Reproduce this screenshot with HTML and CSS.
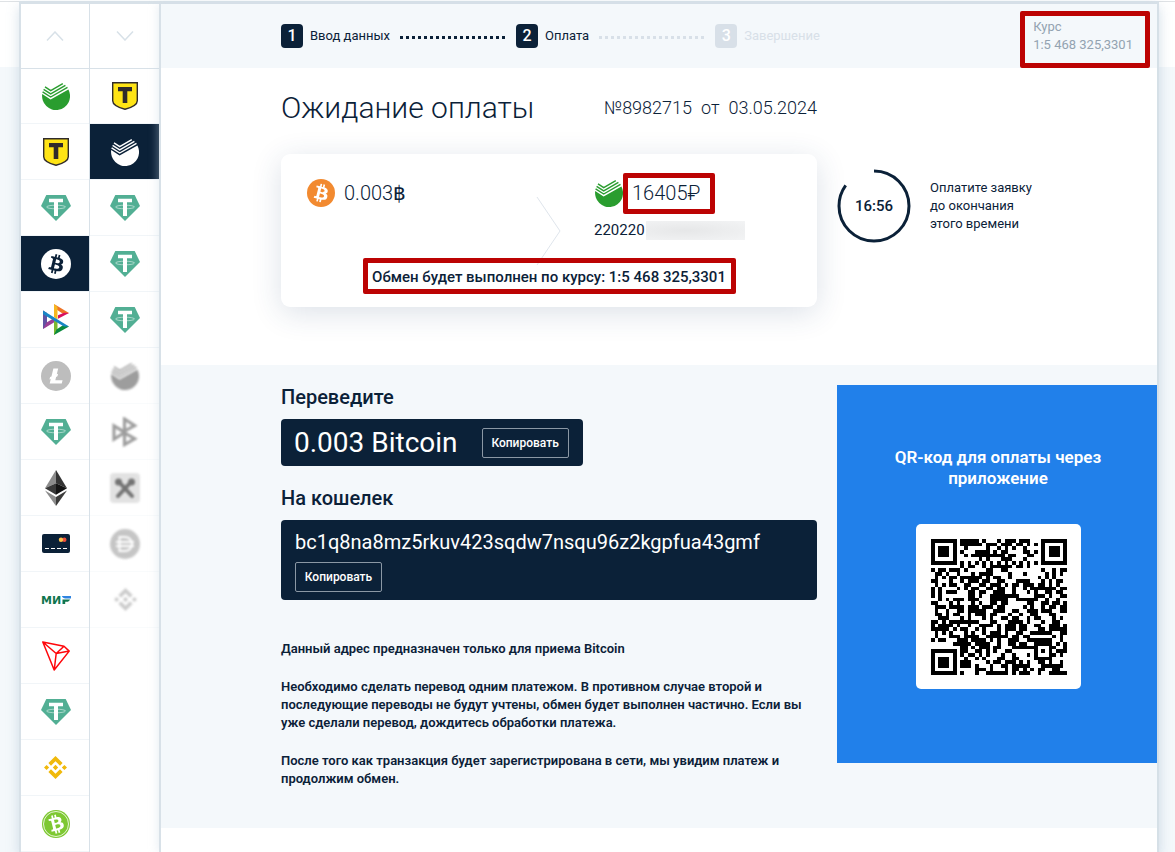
FILE: index.html
```html
<!DOCTYPE html>
<html lang="ru">
<head>
  <meta charset="UTF-8" />
  <meta name="viewport" content="width=device-width, initial-scale=1.0"/>
  <title>Ожидание оплаты</title>
  <link rel="stylesheet" href="styles.css">
</head>
<body>
  <!-- Icon sprite -->
  <svg class="sprite" aria-hidden="true">
    <symbol id="i-sber" viewBox="0 0 28 28">
      <path fill="currentColor" d="M.2 12 8.6 17.400 26.400 7.400A14 14 0 1 1 .2 12z"/>
      <path fill="none" stroke="currentColor" stroke-width="1.4" d="M.6 9.800 8.700 15 25.500 5.400M1.600 7.300l7.100 4.600L23.400 3.400M3 4.800l5.700 3.800L20.800 1.600"/>
    </symbol>
    <symbol id="i-tbank" viewBox="0 0 28 28">
      <path fill="#ffe415" stroke="#302b2b" stroke-width="1.4" d="M1.7.7h24.6v18.1c0 3.7-5 6.6-12.3 8.5C6.7 25.4 1.7 22.5 1.7 18.8z"/>
      <path fill="#302b2b" d="M7 5h14v4.2h-4.7V21h-4.6V9.2H7z"/>
    </symbol>
    <symbol id="i-usdt" viewBox="0 0 30 26">
      <path fill="#52af94" d="M5.3 0h19.4L30 11 15 26 0 11z"/>
      <path fill="#fff" d="M8 3.8h14v3.4h-5V21h-4V7.2H8z"/>
      <ellipse cx="15" cy="12" rx="9.5" ry="1.8" fill="none" stroke="#fff" stroke-width=".5"/>
    </symbol>
    <symbol id="i-btc" viewBox="0 0 32 32">
      <path fill="currentColor" d="M23.189 14.02c.314-2.096-1.283-3.223-3.465-3.975l.708-2.84-1.728-.43-.69 2.765c-.454-.114-.92-.22-1.385-.326l.695-2.783L15.596 6l-.708 2.839c-.376-.086-.746-.17-1.104-.26l.002-.009-2.384-.595-.46 1.846s1.283.294 1.256.312c.7.175.826.638.805 1.006l-.806 3.235c.048.012.11.03.18.057l-.183-.045-1.13 4.532c-.086.212-.303.531-.793.41.018.025-1.256-.313-1.256-.313l-.858 1.978 2.25.561c.418.105.828.215 1.231.318l-.715 2.872 1.727.43.708-2.84c.472.127.93.245 1.378.357l-.706 2.828 1.728.43.715-2.866c2.948.558 5.164.333 6.097-2.333.752-2.146-.037-3.385-1.588-4.192 1.13-.26 1.98-1.003 2.207-2.538zm-3.95 5.538c-.533 2.147-4.148.986-5.32.695l.95-3.805c1.172.293 4.929.872 4.37 3.11zm.535-5.569c-.487 1.953-3.495.96-4.47.717l.86-3.45c.975.243 4.118.696 3.61 2.733z"/>
    </symbol>
    <symbol id="i-adv" viewBox="0 0 26 31">
      <path fill="#ee7326" d="M11 0 26 9 21 10.5 13.5 5.5z"/>
      <path fill="#d9105f" d="M26 9 15 14.8V11.3L21 8.8z"/>
      <path fill="#f6b820" d="M11 0l3.5 3V15.5L11 13z"/>
      <path fill="#6153a3" d="M0 6.5 4 9v13L0 25z"/>
      <path fill="#9a3f96" d="M0 25 13 17.2 9.5 15 3.5 18.5z"/>
      <path fill="#7cb82f" d="M11 16h3.5v12.3L11 31z"/>
      <path fill="#0b8a3e" d="M11 31 26 22.5 21 20.5 13.5 25.5z"/>
      <path fill="#1986c6" d="M0 6.5 26 22.5h-5L0 10.3z"/>
    </symbol>
    <symbol id="i-adv-mono" viewBox="0 0 26 31">
      <path fill="none" stroke="currentColor" stroke-width="3.2" d="M12.5 2 23 9 12.5 14.5zM1.6 9v14L12.5 16zM12.5 16.5 23 22.5 12.5 28.5zM1.6 9l11 6.5"/>
    </symbol>
    <symbol id="i-ltc" viewBox="0 0 32 32">
      <circle cx="16" cy="16" r="16" fill="#bdbdbd"/>
      <path fill="#fff" d="M10.427 19.214L9 19.768l.688-2.759 1.444-.58L13.213 8h5.129l-1.519 6.196 1.41-.571-.68 2.75-1.427.571-.848 3.483H23L22.127 24H9.252z"/>
    </symbol>
    <symbol id="i-eth" viewBox="0 0 22 36">
      <path fill="#8c8c8c" d="M11 0 0 18.3 11 13.3z"/>
      <path fill="#343434" d="M11 0v13.3l11 5z"/>
      <path fill="#393939" d="M0 18.3 11 24.8V13.3z"/>
      <path fill="#141414" d="M22 18.3 11 24.8V13.3z"/>
      <path fill="#8c8c8c" d="M0 20.4 11 36V27z"/>
      <path fill="#3c3c3b" d="M22 20.4 11 36V27z"/>
    </symbol>
    <symbol id="i-card" viewBox="0 0 28 19">
      <rect width="28" height="19" rx="2" fill="#0b2138"/>
      <circle cx="22.3" cy="5.8" r="2.2" fill="#ee4f3c"/>
      <circle cx="19" cy="5.8" r="2.2" fill="#fbc04a"/>
      <path stroke="#fff" stroke-width="1.2" stroke-dasharray="4 2" d="M3 14.5h22"/>
    </symbol>
    <symbol id="i-trx" viewBox="0 0 28 30">
      <path fill="none" stroke="#ff060a" stroke-width="1.5" stroke-linejoin="round" d="M.8 1 22 5.2l5.2 4.9L12.2 29zM.8 1l13.4 11.5L22 5.2M14.2 12.5l13-2.4M14.2 12.5l-2 16.5"/>
    </symbol>
    <symbol id="i-bnb" viewBox="0 0 24 24">
      <path fill="currentColor" d="M7.3 10.1 12 5.4l4.7 4.7 2.7-2.7L12 0 4.6 7.4zM0 12l2.7-2.7L5.4 12l-2.7 2.7zM7.3 13.9 12 18.6l4.7-4.7 2.7 2.7L12 24l-7.4-7.4zM18.6 12l2.7-2.7L24 12l-2.7 2.7zM14.8 12 12 14.8 9.2 12 12 9.2z"/>
    </symbol>
    <symbol id="i-bch" viewBox="0 0 28 28">
      <circle cx="14" cy="14" r="14" fill="#7ec832"/>
      <circle cx="14" cy="14" r="12.5" fill="none" stroke="#fff" stroke-width=".8"/>
      <use href="#i-btc" class="white" x="-1.5" y="-1.5" width="31" height="31" transform="rotate(-28 14 14)"/>
    </symbol>
    <symbol id="i-tools" viewBox="0 0 30 30">
      <rect width="30" height="30" rx="4" fill="#dedede"/>
      <path stroke="#5c5c5c" stroke-width="4" stroke-linecap="round" d="M9 9l13 14M21 9 8 23"/>
      <circle cx="8.5" cy="9" r="3.5" fill="#5c5c5c"/>
      <circle cx="21.5" cy="9" r="3.5" fill="#5c5c5c"/>
    </symbol>
    <symbol id="i-dai" viewBox="0 0 30 30">
      <circle cx="15" cy="15" r="15" fill="#bcbcbc"/>
      <path fill="none" stroke="#fff" stroke-width="2" d="M9.5 8H15a7 7 0 0 1 0 14H9.5zM6 13h18M6 17h18"/>
    </symbol>
  </svg>

  <div class="shell">
    <aside class="sidebar">
      <div class="column">
        <button class="scroll" aria-label="Вверх"><svg width="18" height="10" viewBox="0 0 18 10"><path d="M1 9.5 9 1l8 8.5"/></svg></button>
        <button class="coin green" aria-label="Сбер"><svg width="28" height="28"><use href="#i-sber"/></svg></button>
        <button class="coin" aria-label="Т-Банк"><svg width="28" height="28"><use href="#i-tbank"/></svg></button>
        <button class="coin" aria-label="USDT"><svg width="30" height="26"><use href="#i-usdt"/></svg></button>
        <button class="coin active" aria-label="Bitcoin">
          <svg width="30" height="30" viewBox="0 0 30 30"><circle cx="15" cy="15" r="15" fill="#fff"/><use href="#i-btc" class="navy" x="-1" y="-1" width="32" height="32"/></svg>
        </button>
        <button class="coin" aria-label="СБП"><svg width="26" height="31"><use href="#i-adv"/></svg></button>
        <button class="coin" aria-label="Litecoin"><svg width="30" height="30"><use href="#i-ltc"/></svg></button>
        <button class="coin" aria-label="USDT"><svg width="30" height="26"><use href="#i-usdt"/></svg></button>
        <button class="coin" aria-label="Ethereum"><svg width="22" height="36"><use href="#i-eth"/></svg></button>
        <button class="coin" aria-label="Карта"><svg width="28" height="19"><use href="#i-card"/></svg></button>
        <button class="coin" aria-label="Мир">
          <svg width="32" height="20" viewBox="0 0 32 20">
            <text class="mir" x="1" y="14">МИ</text>
            <path fill="#0f754e" d="M22.5 9.5H30c-.6 1.5-1.8 2.3-3.3 2.3h-1.500V14h-2.700z"/>
            <path fill="#2f83e0" d="M21.800 6H31v2.500h-5.500c-1.700 0-3.200-1-3.700-2.500z"/>
          </svg>
        </button>
        <button class="coin" aria-label="Tron"><svg width="28" height="30"><use href="#i-trx"/></svg></button>
        <button class="coin" aria-label="USDT"><svg width="30" height="26"><use href="#i-usdt"/></svg></button>
        <button class="coin gold" aria-label="BNB"><svg width="23" height="23"><use href="#i-bnb"/></svg></button>
        <button class="coin" aria-label="Bitcoin Cash"><svg width="28" height="28"><use href="#i-bch"/></svg></button>
      </div>
      <div class="column">
        <button class="scroll" aria-label="Вниз"><svg width="18" height="10" viewBox="0 0 18 10"><path d="M1 .5 9 9l8-8.5"/></svg></button>
        <button class="coin" aria-label="Т-Банк"><svg width="28" height="28"><use href="#i-tbank"/></svg></button>
        <button class="coin active" aria-label="Сбер"><svg width="28" height="28"><use href="#i-sber"/></svg></button>
        <button class="coin" aria-label="USDT"><svg width="30" height="26"><use href="#i-usdt"/></svg></button>
        <button class="coin" aria-label="USDT"><svg width="30" height="26"><use href="#i-usdt"/></svg></button>
        <button class="coin" aria-label="USDT"><svg width="30" height="26"><use href="#i-usdt"/></svg></button>
        <button class="coin disabled" disabled aria-label="Сбер"><svg width="28" height="28"><use href="#i-sber"/></svg></button>
        <button class="coin disabled" disabled aria-label="СБП"><svg width="26" height="30"><use href="#i-adv-mono"/></svg></button>
        <button class="coin disabled" disabled aria-label="Обмен"><svg width="30" height="30"><use href="#i-tools"/></svg></button>
        <button class="coin disabled" disabled aria-label="Dai"><svg width="30" height="30"><use href="#i-dai"/></svg></button>
        <button class="coin disabled pale" disabled aria-label="BNB"><svg width="23" height="23"><use href="#i-bnb"/></svg></button>
      </div>
    </aside>

    <main class="main">
      <header class="topbar">
        <ol class="steps">
          <li class="step"><span class="num">1</span>Ввод данных</li>
          <li class="dots"></li>
          <li class="step"><span class="num">2</span>Оплата</li>
          <li class="dots muted"></li>
          <li class="step muted"><span class="num">3</span>Завершение</li>
        </ol>
        <div class="rate marked">Курс<br>1:5 468 325,3301</div>
      </header>

      <section class="order">
        <div class="order-left">
          <div class="order-head">
            <h1>Ожидание оплаты</h1>
            <p class="order-no"><span>№8982715</span> <span>от</span> <span>03.05.2024</span></p>
          </div>
          <div class="card">
            <div class="pair">
              <div class="amount">
                <svg width="28" height="28" viewBox="0 0 28 28"><circle cx="14" cy="14" r="14" fill="#f28a30"/><use href="#i-btc" class="white" x="-1" y="-1" width="30" height="30"/></svg>
                <span>0.003<b>฿</b></span>
              </div>
              <svg class="arrow" width="25" height="70" viewBox="0 0 25 70"><path d="M1 1l23 34L1 69"/></svg>
              <div class="receive">
                <div class="amount">
                  <svg class="green" width="28" height="28"><use href="#i-sber"/></svg>
                  <span class="marked sum">16405₽</span>
                </div>
                <div class="account">220220<span class="hidden-part"></span></div>
              </div>
            </div>
            <p class="card-rate"><span class="marked">Обмен будет выполнен по курсу: 1:5 468 325,3301</span></p>
          </div>
        </div>
        <div class="timer">
          <div class="clock">
            <svg width="74" height="74" viewBox="0 0 74 74"><circle cx="37" cy="37" r="35" pathLength="100"/></svg>
            <span>16:56</span>
          </div>
          <p>Оплатите заявку<br>до окончания<br>этого времени</p>
        </div>
      </section>

      <section class="payment">
        <div class="details">
          <h2>Переведите</h2>
          <div class="box box-sum">
            <span class="value">0.003 Bitcoin</span>
            <button class="copy">Копировать</button>
          </div>
          <h2>На кошелек</h2>
          <div class="box box-wallet">
            <span class="value">bc1q8na8mz5rkuv423sqdw7nsqu96z2kgpfua43gmf</span>
            <button class="copy">Копировать</button>
          </div>
          <div class="notes">
            <p>Данный адрес предназначен только для приема Bitcoin</p>
            <p>Необходимо сделать перевод одним платежом. В противном случае второй и последующие переводы не будут учтены, обмен будет выполнен частично. Если вы уже сделали перевод, дождитесь обработки платежа.</p>
            <p>После того как транзакция будет зарегистрирована в сети, мы увидим платеж и продолжим обмен.</p>
          </div>
        </div>
        <div class="qr-panel">
          <h3>QR-код для оплаты через приложение</h3>
          <div class="qr"><svg id="qr" viewBox="0 0 37 37" shape-rendering="crispEdges"></svg></div>
        </div>
      </section>
    </main>
  </div>
  <script src="script.js"></script>
</body>
</html>
```
FILE: styles.css
```css
* {
  box-sizing: border-box;
}

body {
  margin: 0;
  font-family: Roboto, sans-serif;
  font-size: 13px;
  line-height: 18px;
  color: #0b2138;
  background: linear-gradient(#fff 1px, #dfe2e5 1px 2px, #fff 2px 67px, #f4f8fb 67px);
}

body::before {
  content: "";
  display: block;
  height: 1px;
}

h1, h2, h3, p, ol {
  margin: 0;
  padding: 0;
}

button {
  font-family: inherit;
  cursor: pointer;
}

.sprite {
  position: absolute;
  width: 0;
  height: 0;
}

.shell {
  display: flex;
  min-height: calc(100vh - 1px);
  margin: 0 16px 0 19px;
  border: 2px solid #d8e1e8;
  border-top-width: 3px;
  border-bottom: 0;
  background: #fff;
  box-shadow: 0 6px 12px rgba(120, 155, 185, 0.3);
}

/* Currency columns */
.sidebar {
  display: flex;
  flex: none;
}

.column {
  display: flex;
  flex-direction: column;
  width: 69px;
  border-right: 1px solid #d8e1e8;
}

.column + .column {
  border-right: 0;
}

.scroll {
  position: relative;
  height: 64px;
  padding: 0;
  border: 0;
  background: #fff;
  box-shadow: 0 1px 0 #d8e1e8;
}

.scroll path {
  fill: none;
  stroke: #d8e1e8;
  stroke-width: 1.5;
}

.coin {
  display: flex;
  align-items: center;
  justify-content: center;
  height: 56px;
  padding: 0 0 0 1px;
  border: 0;
  border-bottom: 1px solid #f1f5f8;
  background: #fff;
  color: #0b2138;
}

.coin.active {
  background: #0b2138;
  background-clip: padding-box;
  color: #fff;
}

.green,
.coin.green {
  color: #2a9d2f;
}

.coin.gold {
  color: #f0b90b;
}

.coin.disabled {
  color: #8c8c8c;
  border-bottom-color: #f9fbfc;
}

.coin.disabled svg {
  filter: blur(1px);
  opacity: 0.85;
}

.coin.pale {
  color: #c4c4c4;
}

.navy {
  color: #0b2138;
}

.white {
  color: #fff;
}

.mir {
  font: bold 11px "DejaVu Sans", sans-serif;
  fill: #0f754e;
}

/* Main area */
.main {
  flex: 1;
  position: relative;
  border-left: 2px solid #d8e1e8;
  box-shadow: -2px 0 8px rgba(200, 215, 225, 0.35);
  background: #fff;
}

.topbar {
  display: flex;
  justify-content: space-between;
  height: 64px;
  padding: 0 24px 0 120px;
  background: #f4f8fb;
}

.steps {
  display: flex;
  align-items: center;
  list-style: none;
}

.step {
  display: flex;
  align-items: center;
  gap: 7px;
}

.num {
  width: 22px;
  height: 24px;
  border-radius: 4px;
  background: #0b2138;
  color: #fff;
  font-size: 16px;
  font-weight: 500;
  line-height: 24px;
  text-align: center;
}

.dots {
  width: 107px;
  height: 3px;
  margin: 2px 9px 0 10px;
  background: repeating-linear-gradient(90deg, #0b2138 0 3px, transparent 3px 6px);
}

.step.muted {
  color: #d8e0e8;
}

.step.muted .num {
  background: #d8e0e8;
  color: #fff;
}

.dots.muted {
  background: repeating-linear-gradient(90deg, #d8e0e8 0 3px, transparent 3px 6px);
}

.rate {
  align-self: flex-start;
  margin-top: 14px;
  color: #93a3b1;
}

/* Red frame around the numbers that have to be checked */
.marked {
  position: relative;
}

.marked::after {
  content: "";
  position: absolute;
  inset: -10px -10px -8px -9px;
  border: 5px solid #bc0303;
  border-radius: 2px;
}

.rate.marked::after {
  inset: -7px -17px -14px -13px;
}

.sum.marked::after {
  inset: -9px -15px -10px -9px;
}

.order {
  display: flex;
  gap: 20px;
  padding: 20px 0 58px 120px;
}

.order-left,
.details {
  flex: 0 1 536px;
}

.order-head {
  display: flex;
  align-items: center;
  justify-content: space-between;
  height: 40px;
  margin-bottom: 26px;
}

h1 {
  font-size: 30px;
  font-weight: 300;
  line-height: 40px;
}

.order-no {
  display: flex;
  gap: 9px;
  font-size: 18px;
  font-weight: 300;
}

.card {
  height: 153px;
  padding: 25px 26px 0;
  border-radius: 9px;
  background: #fff;
  box-shadow: 0 6px 30px rgba(40, 70, 110, 0.16);
}

.pair {
  display: flex;
  height: 89px;
}

.amount {
  display: flex;
  align-items: center;
  gap: 9px;
  width: 229px;
  height: 28px;
  font-size: 20px;
  font-weight: 300;
  line-height: 22px;
}

.amount b {
  font-weight: 500;
}

.receive {
  padding-left: 34px;
}

.receive .amount {
  width: auto;
}

.receive .account {
  display: flex;
  gap: 1px;
  margin-top: 14px;
  margin-left: -1px;
  font-size: 15px;
}

.hidden-part {
  width: 99px;
  height: 19px;
  background: radial-gradient(ellipse at 40% 50%, #e6e7e8, #f3f4f5);
}

.arrow {
  margin-top: 17px;
}

.arrow path {
  fill: none;
  stroke: #dfe5ec;
}

.card-rate {
  text-align: center;
  font-size: 15px;
  font-weight: 500;
}

.card-rate .marked {
  display: inline-block;
}

.timer {
  display: flex;
  flex: 1;
  align-items: center;
  gap: 19px;
  height: 74px;
  margin-top: 81px;
}

.clock {
  display: grid;
  place-items: center;
}

.clock svg,
.clock span {
  grid-area: 1 / 1;
}

.clock circle {
  fill: none;
  stroke: #0b2138;
  stroke-width: 3;
  stroke-dasharray: 85 100;
  transform: rotate(-90deg);
  transform-origin: center;
}

.clock span {
  font-size: 15px;
  font-weight: 500;
}

/* Payment details */
.payment {
  display: flex;
  gap: 20px;
  height: 463px;
  padding: 20px 0 65px 120px;
  background: #f4f8fb;
}

h2 {
  font-size: 20px;
  font-weight: 500;
  line-height: 24px;
  margin-bottom: 10px;
}

.box {
  border-radius: 4px;
  background: #0b2138;
  color: #fff;
}

.box-sum {
  display: inline-flex;
  align-items: center;
  gap: 24px;
  height: 47px;
  padding: 0 14px 0 13px;
  margin-bottom: 20px;
  font-size: 28px;
}

.box-wallet {
  height: 80px;
  padding: 10px 14px 8px;
  font-size: 20px;
  line-height: 24px;
}

.copy {
  display: block;
  width: 87px;
  height: 30px;
  padding: 0;
  border: 1px solid #8b98a5;
  border-radius: 2px;
  background: none;
  color: #fff;
  font-size: 12px;
  font-weight: 500;
}

.box-wallet .copy {
  margin-top: 8px;
}

.notes {
  padding-top: 40px;
  font-weight: 600;
}

.notes p {
  margin-bottom: 20px;
}

.qr-panel {
  display: flex;
  flex: 1;
  flex-direction: column;
  align-items: center;
  padding: 62px 0 0 2px;
  background: #2180ea;
  color: #fff;
}

h3 {
  width: 240px;
  margin-bottom: 35px;
  font-size: 17px;
  font-weight: 600;
  line-height: 21px;
  text-align: center;
}

.qr {
  width: 165px;
  height: 165px;
  padding: 15px 14px 14px 15px;
  border-radius: 5px;
  background: #fff;
}

.qr svg {
  display: block;
  width: 136px;
  height: 136px;
}
```
FILE: script.js
```js
// QR code, version 5-M: 37x37 modules, two blocks of 43 data + 24 check bytes
const SIZE = 37;
const MASK = 3;
const FORMAT = "101101101001011"; // level M, mask 3
const text = "bitcoin:bc1q8na8mz5rkuv423sqdw7nsqu96z2kgpfua43gmf?amount=0.003";

function mul(a, b) {
  let r = 0;
  for (let i = 7; i >= 0; i--) {
    r = (r << 1) ^ ((r >> 7) * 0x11d);
    if ((b >> i) & 1) r ^= a;
  }
  return r;
}

function checkBytes(data, count) {
  let gen = new Array(count).fill(0);
  gen[count - 1] = 1;
  let root = 1;
  for (let i = 0; i < count; i++) {
    for (let j = 0; j < count; j++) {
      gen[j] = mul(gen[j], root);
      if (j + 1 < count) gen[j] ^= gen[j + 1];
    }
    root = mul(root, 2);
  }
  let rest = new Array(count).fill(0);
  data.forEach(b => {
    const f = b ^ rest.shift();
    rest.push(0);
    gen.forEach((g, i) => rest[i] ^= mul(g, f));
  });
  return rest;
}

function codewords() {
  let bits = "0100" + text.length.toString(2).padStart(8, "0");
  for (const c of text) bits += c.charCodeAt(0).toString(2).padStart(8, "0");
  bits += "0000";
  const bytes = bits.match(/.{8}/g).map(b => parseInt(b, 2));
  for (let pad = 0xec; bytes.length < 86; pad ^= 0xfd) bytes.push(pad);
  const a = bytes.slice(0, 43), b = bytes.slice(43);
  const ea = checkBytes(a, 24), eb = checkBytes(b, 24);
  return [...a.flatMap((v, i) => [v, b[i]]), ...ea.flatMap((v, i) => [v, eb[i]])];
}

const grid = Array.from({ length: SIZE }, () => new Array(SIZE).fill(null));

function finder(x, y) {
  for (let r = -1; r <= 7; r++) {
    for (let c = -1; c <= 7; c++) {
      if (!grid[y + r] || grid[y + r][x + c] === undefined) continue;
      const d = Math.max(Math.abs(r - 3), Math.abs(c - 3));
      grid[y + r][x + c] = d !== 2 && d !== 4;
    }
  }
}

finder(0, 0);
finder(SIZE - 7, 0);
finder(0, SIZE - 7);

for (let r = -2; r <= 2; r++) {
  for (let c = -2; c <= 2; c++) {
    grid[30 + r][30 + c] = Math.max(Math.abs(r), Math.abs(c)) !== 1;
  }
}

for (let i = 8; i < SIZE - 8; i++) grid[6][i] = grid[i][6] = i % 2 === 0;

// format bits, both copies
const around = [0, 1, 2, 3, 4, 5, 7, 8];
for (let i = 0; i < 15; i++) {
  const on = FORMAT[i] === "1";
  if (i < 8) grid[8][around[i]] = on;
  else grid[around[14 - i]][8] = on;
  if (i < 7) grid[SIZE - 1 - i][8] = on;
  else grid[8][SIZE - 15 + i] = on;
}
grid[SIZE - 8][8] = true;

function masked(x, y) {
  return [
    (x + y) % 2, y % 2, x % 3, (x + y) % 3,
    ((x / 3 | 0) + (y / 2 | 0)) % 2, x * y % 2 + x * y % 3,
    (x * y % 2 + x * y % 3) % 2, ((x + y) % 2 + x * y % 3) % 2
  ][MASK] === 0;
}

const stream = codewords().map(b => b.toString(2).padStart(8, "0")).join("");
let n = 0;
for (let right = SIZE - 1; right > 0; right -= 2) {
  if (right === 6) right = 5;
  for (let v = 0; v < SIZE; v++) {
    const y = ((right + 1) & 2) === 0 ? SIZE - 1 - v : v;
    for (let x = right; x > right - 2; x--) {
      if (grid[y][x] !== null) continue;
      grid[y][x] = (stream[n++] === "1") !== masked(x, y);
    }
  }
}

let d = "";
grid.forEach((row, y) => row.forEach((on, x) => {
  if (on) d += `M${x} ${y}h1v1h-1z`;
}));
const path = document.createElementNS("http://www.w3.org/2000/svg", "path");
path.setAttribute("d", d);
document.getElementById("qr").appendChild(path);
```
